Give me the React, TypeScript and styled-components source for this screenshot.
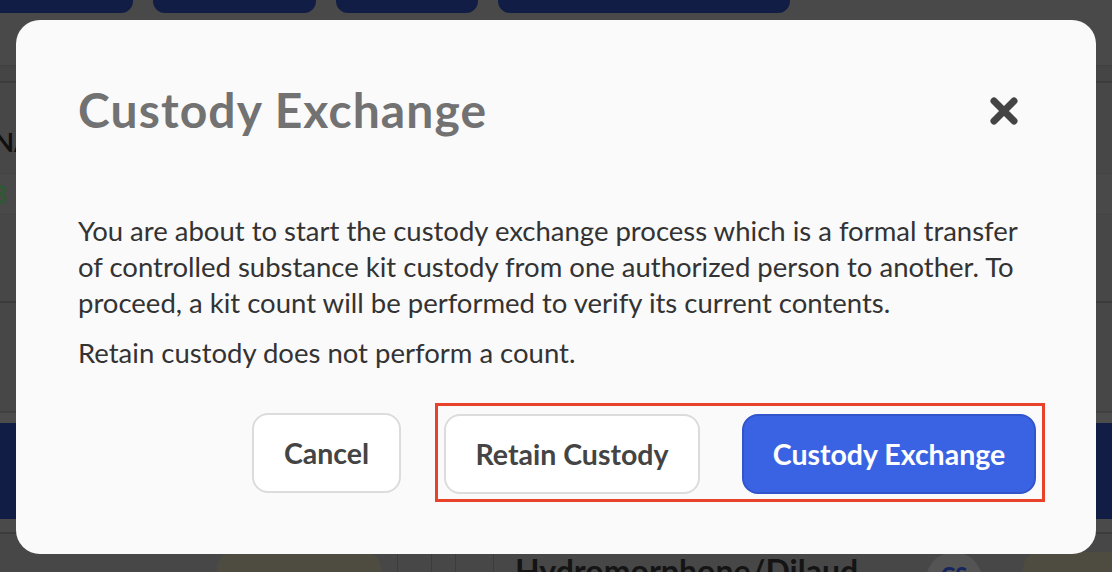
import React from "react";
import styled, { createGlobalStyle } from "styled-components";

const Global = createGlobalStyle`
  html, body { margin: 0; padding: 0; }
  body {
    width: 1112px;
    height: 572px;
    overflow: hidden;
    background: #474747;
    font-family: Lato, "Open Sans", sans-serif;
  }
  * { box-sizing: border-box; }
`;

/* ---------- dimmed page behind the dialog ---------- */

const Page = styled.div`
  width: 1112px;
  height: 572px;
  display: flex;
  flex-direction: column;
  background: #474747;
  overflow: hidden;
`;

const TopBar = styled.div`
  height: 66px;
  flex: none;
  background: #494949;
  border-bottom: 1px solid #404040;
`;

const TabRow = styled.div`
  display: flex;
  gap: 20px;
  margin-left: -20px;
`;

const Tab = styled.div<{ $w: number }>`
  width: ${(p) => p.$w}px;
  height: 13px;
  background: #111d45;
  border-radius: 0 0 12px 12px;
`;

const SubBar = styled.div`
  height: 17px;
  flex: none;
  background: #454545;
  border-bottom: 2px solid #3c3c3c;
`;

const InfoPanel = styled.div`
  height: 220px;
  flex: none;
  display: flex;
  flex-direction: column;
  padding-top: 44px;
  border-bottom: 2px solid #3b3b3b;
`;

const InfoName = styled.div`
  font-size: 26px;
  font-weight: 700;
  color: #101010;
  margin-left: -6px;
  line-height: 30px;
`;

const InfoStatus = styled.div`
  margin-top: 16px;
  height: 42px;
  display: flex;
  align-items: center;
  font-size: 26px;
  font-weight: 700;
  color: #2d5a33;
  margin-left: -8px;
  background: #494949;
  border-top: 1px solid #444;
  border-bottom: 1px solid #444;
`;

const EmptyPanel = styled.div`
  height: 108px;
  flex: none;
`;

const Divider = styled.div`
  height: 12px;
  flex: none;
  background: #4c4c4c;
  border-top: 2px solid #404040;
`;

const BlueBar = styled.div`
  height: 96px;
  flex: none;
  background: #111d45;
`;

const Gutter = styled.div`
  height: 15px;
  flex: none;
  background: #4a4a4a;
  border-bottom: 2px solid #3c3c3c;
`;

const ItemRow = styled.div`
  flex: 1;
  display: flex;
  align-items: flex-start;
  padding-top: 18px;
`;

const Pill = styled.div<{ $w: number; $ml: number }>`
  width: ${(p) => p.$w}px;
  margin-left: ${(p) => p.$ml}px;
  height: 60px;
  flex: none;
  border-radius: 16px;
  background: #4e4b41;
`;

const VLine = styled.div<{ $ml: number }>`
  width: 1px;
  height: 60px;
  margin-top: -18px;
  margin-left: ${(p) => p.$ml}px;
  background: #3c3c3c;
  flex: none;
`;

const DrugName = styled.div`
  margin-left: 21px;
  font-size: 32px;
  font-weight: 700;
  color: #141414;
  line-height: 38px;
  white-space: nowrap;
  width: 390px;
  flex: none;
`;

const Badge = styled.div`
  margin-left: 21px;
  width: 56px;
  height: 56px;
  flex: none;
  border-radius: 50%;
  background: #545454;
  display: flex;
  justify-content: center;
  padding-top: 10px;
  font-size: 22px;
  font-weight: 900;
  color: #15255e;
`;

/* ---------- dialog ---------- */

const Modal = styled.div`
  position: fixed;
  left: 16px;
  top: 20px;
  width: 1080px;
  height: 534px;
  background: #fafafa;
  border-radius: 24px;
  padding: 62px 56px 0 62px;
  display: flex;
  flex-direction: column;
`;

const Header = styled.div`
  display: flex;
  align-items: center;
  justify-content: space-between;
  padding-right: 22px;
`;

const Title = styled.h2`
  margin: 0;
  font-family: Lato, sans-serif;
  font-size: 48px;
  line-height: 56px;
  font-weight: 700;
  color: #727272;
  letter-spacing: 1.1px;
`;

const CloseButton = styled.button`
  border: none;
  background: none;
  padding: 0;
  width: 28px;
  height: 28px;
  display: flex;
  cursor: pointer;
  margin-top: 2px;
`;

const Body = styled.div`
  margin-top: 75px;
  margin-right: 6px;
  display: flex;
  flex-direction: column;
  gap: 14px;
`;

const Text = styled.p`
  margin: 0;
  font-size: 27.5px;
  line-height: 36px;
  color: #333333;
  font-weight: 400;
`;

const Actions = styled.div`
  margin-top: 32px;
  display: flex;
  justify-content: flex-end;
  align-items: center;
  gap: 34px;
  margin-right: -5px;
`;

const Highlight = styled.div`
  display: flex;
  gap: 42px;
  border: 3px solid #e8432a;
  padding: 8px 6px 5px 6px;
`;

const Button = styled.button<{ $primary?: boolean; $w: number }>`
  width: ${(p) => p.$w}px;
  height: 80px;
  border-radius: 16px;
  font-family: Lato, sans-serif;
  font-size: 28.5px;
  font-weight: 700;
  cursor: pointer;
  padding: 0;
  border: 2px solid ${(p) => (p.$primary ? "#3255cc" : "#dcdcdc")};
  background: ${(p) => (p.$primary ? "#3a63e3" : "#ffffff")};
  color: ${(p) => (p.$primary ? "#ffffff" : "#444444")};
`;

export default function App() {
  return (
    <>
      <Global />
      <Page>
        <TopBar>
          <TabRow>
            <Tab $w={153} />
            <Tab $w={163} />
            <Tab $w={142} />
            <Tab $w={292} />
          </TabRow>
        </TopBar>
        <SubBar />
        <InfoPanel>
          <InfoName>NA</InfoName>
          <InfoStatus>3</InfoStatus>
        </InfoPanel>
        <EmptyPanel />
        <Divider />
        <BlueBar />
        <Gutter />
        <ItemRow>
          <Pill $w={164} $ml={217} />
          <VLine $ml={16} />
          <VLine $ml={33} />
          <VLine $ml={23} />
          <VLine $ml={37} />
          <DrugName>Hydromorphone/Dilaud</DrugName>
          <Badge>CS</Badge>
          <Pill $w={120} $ml={41} />
        </ItemRow>
      </Page>

      <Modal role="dialog" aria-labelledby="dlg-title">
        <Header>
          <Title id="dlg-title">Custody Exchange</Title>
          <CloseButton aria-label="Close">
            <svg width="28" height="28" viewBox="0 0 28 28">
              <path
                d="M4 4 L24 24 M24 4 L4 24"
                stroke="#444444"
                strokeWidth="7"
                strokeLinecap="round"
                fill="none"
              />
            </svg>
          </CloseButton>
        </Header>
        <Body>
          <Text>
            You are about to start the custody exchange process which is a formal transfer of
            controlled substance kit custody from one authorized person to another. To proceed, a
            kit count will be performed to verify its current contents.
          </Text>
          <Text>Retain custody does not perform a count.</Text>
        </Body>
        <Actions>
          <Button $w={149}>Cancel</Button>
          <Highlight>
            <Button $w={256}>Retain Custody</Button>
            <Button $w={294} $primary>
              Custody Exchange
            </Button>
          </Highlight>
        </Actions>
      </Modal>
    </>
  );
}
